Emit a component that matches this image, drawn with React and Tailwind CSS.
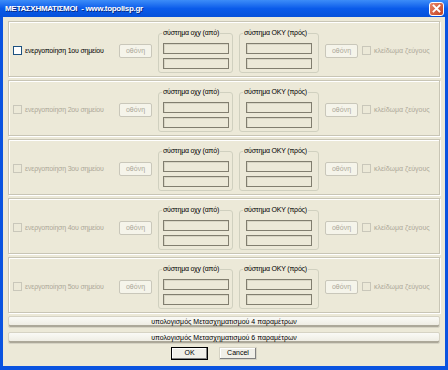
import React from "react";

const font = { fontFamily: '"Liberation Sans", Arial, sans-serif' };

function Check({ disabled }) {
  return (
    <span
      className={`inline-block w-[9px] h-[9px] shrink-0 border ${
        disabled ? "border-[#C9C7BA] bg-[#ECE9D8]" : "border-[#1C5180] bg-white"
      }`}
    />
  );
}

function Screen() {
  return (
    <div className="w-[33px] h-[14px] shrink-0 border border-[#C9C7BA] rounded-[2px] bg-[#F5F4EA] flex items-center justify-center text-[7px] text-[#ACA899]">
      οθόνη
    </div>
  );
}

function Group({ title, width }) {
  return (
    <div className={`relative shrink-0 h-[40px] border border-[#D0D0BF] rounded-[3px] ${width} flex flex-col items-center pt-[9px] gap-[4px]`}>
      <span className="absolute -top-[5px] left-[3px] bg-[#ECE9D8] px-[1px] text-[7px] leading-[8px] text-black tracking-[-0.2px]">
        {title}
      </span>
      <div className="w-[66px] h-[11px] border border-[#817E6F] bg-[#ECE9D8] shadow-[inset_1px_1px_0_#D8D5C4]" />
      <div className="w-[66px] h-[11px] border border-[#817E6F] bg-[#ECE9D8] shadow-[inset_1px_1px_0_#D8D5C4]" />
    </div>
  );
}

function Panel({ n, active }) {
  return (
    <div className="h-[56px] border border-[#C8C5B5] shadow-[inset_1px_1px_0_#FFFFFF,1px_1px_0_#FFFFFF] flex items-start">
      <div className="mt-[24px] ml-[4px] flex items-center w-[106px] shrink-0">
        <Check disabled={!active} />
        <span className={`ml-[3px] text-[7px] leading-[9px] whitespace-nowrap tracking-[-0.2px] ${active ? "text-black" : "text-[#ACA899]"}`}>
          ενεργοποίηση {n}ου σημείου
        </span>
      </div>
      <div className="mt-[22px]">
        <Screen />
      </div>
      <div className="mt-[11px] ml-[6px] flex gap-[6px]">
        <Group title="σύστημα οχy  (από)" width="w-[75px]" />
        <Group title="σύστημα ΟΚΥ  (πρός)" width="w-[80px]" />
      </div>
      <div className="mt-[22px] ml-[6px]">
        <Screen />
      </div>
      <div className="mt-[24px] ml-[4px] flex items-center">
        <Check disabled />
        <span className="ml-[3px] text-[7px] leading-[9px] whitespace-nowrap text-[#ACA899]">
          κλείδωμα ζεύγους
        </span>
      </div>
    </div>
  );
}

function WideButton({ children, h }) {
  return (
    <div className={`${h} border border-[#D6D3C4] rounded-[2px] bg-gradient-to-b from-[#FAFAF6] to-[#ECEADF] shadow-[inset_0_-2px_0_#ACA899] flex items-center justify-center text-[7px] text-black`}>
      {children}
    </div>
  );
}

export default function App() {
  return (
    <div style={font} className="w-[448px] h-[370px] bg-[#0A53E0] flex flex-col overflow-hidden">
      {/* title bar */}
      <div className="h-[17px] shrink-0 bg-gradient-to-b from-[#3C8CF8] via-[#0A5BEA] to-[#0551DA] flex items-center pl-[5px] pr-[4px]">
        <span className="text-white font-bold text-[8px] leading-none whitespace-nowrap tracking-[-0.3px] [text-shadow:1px_1px_0_#0A2A80]">
          ΜΕΤΑΣΧΗΜΑΤΙΣΜΟΙ&nbsp;&nbsp;- www.topolisp.gr
        </span>
        <div className="ml-auto w-[15px] h-[14px] rounded-[3px] border border-white bg-gradient-to-br from-[#E9866A] to-[#C3401A] flex items-center justify-center">
          <svg width="9" height="9" viewBox="0 0 9 9">
            <path d="M1.5 1.5 L7.5 7.5 M7.5 1.5 L1.5 7.5" stroke="white" strokeWidth="1.8" strokeLinecap="square" />
          </svg>
        </div>
      </div>

      {/* body */}
      <div className="flex-1 mx-[3px] mb-[4px] bg-[#ECE9D8] px-[5px] pt-[4px] flex flex-col">
        <div className="flex flex-col gap-[3px]">
          <Panel n={1} active />
          <Panel n={2} />
          <Panel n={3} />
          <Panel n={4} />
          <Panel n={5} />
        </div>
        <div className="mt-[3px] flex flex-col gap-[4px]">
          <WideButton h="h-[12px]">υπολογισμός Μετασχηματισμού 4 παραμέτρων</WideButton>
          <WideButton h="h-[12px]">υπολογισμός Μετασχηματισμού 6 παραμέτρων</WideButton>
        </div>
        <div className="mt-[3px] flex justify-center gap-[11px] pr-[20px]">
          <div className="w-[37px] h-[13px] border border-black bg-[#F0EFE8] shadow-[inset_-1px_-1px_0_#808080,inset_1px_1px_0_#FFFFFF] flex items-center justify-center text-[7px] text-black">
            OK
          </div>
          <div className="w-[38px] h-[13px] border border-[#D6D3C4] bg-[#F0EFE8] shadow-[inset_-1px_-1px_0_#808080,inset_1px_1px_0_#FFFFFF] flex items-center justify-center text-[7px] text-black">
            Cancel
          </div>
        </div>
      </div>
    </div>
  );
}
